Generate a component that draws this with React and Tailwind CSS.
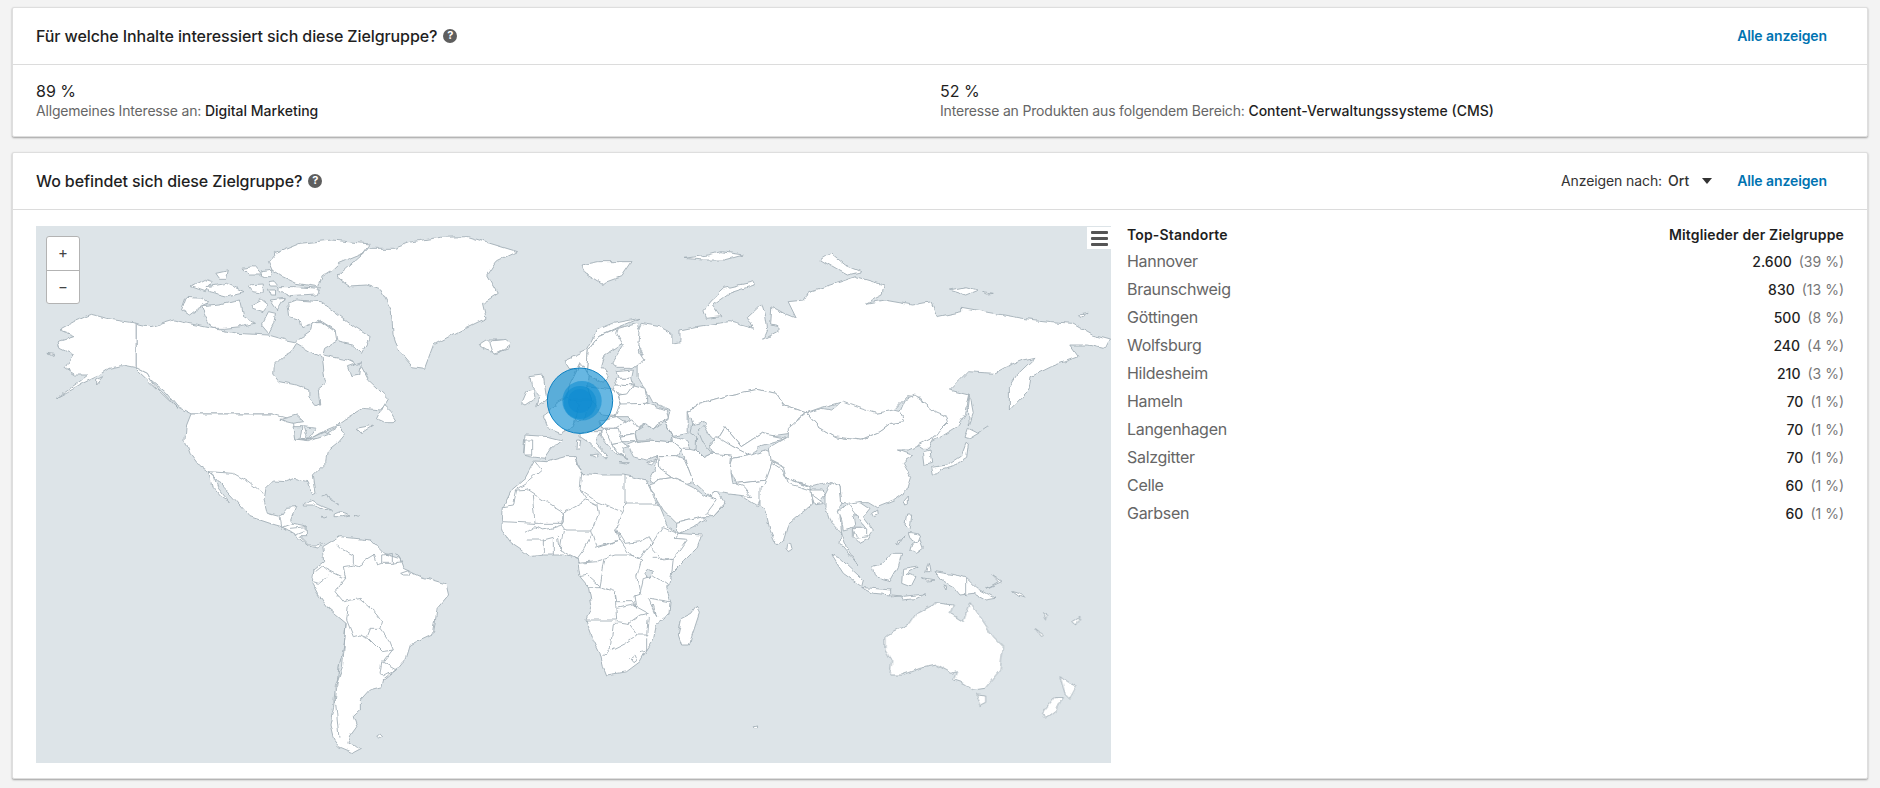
import React from "react";

const Z3 = [30, 220, 2.851, 3];
const Z4 = [480, 220, 2.45, 3];
const Z5 = [280, 480, 2.8, 3];
const Z6 = [800, 480, 3, 3];
const Z7 = [490, 300, 3, 3];
const Z8 = [760, 380, 3, 3];
const Z9 = [180, 420, 3, 3];
const Z10 = [500, 480, 3, 3];

const land = [
  [Z3, [
    "90,325 125,305 175,283 230,298 303,310 303,443 335,460 350,490 380,520 420,565 345,490 300,445 262,437 225,445 190,470 150,490 110,515 75,535 135,490 165,465 130,465 100,445 125,405 85,385 80,365 125,350 90,335",
    "303,310 345,320 372,312 410,300 450,310 520,325 590,340 680,345 730,360 755,365 780,350 800,335 805,305 830,305 870,335 880,360 840,385 835,405 905,420 945,440 965,480 1020,535 1000,570 950,565 910,590 870,620 825,640 790,662 755,660 750,620 720,600 690,582 460,582 420,560 385,515 345,480 335,460 303,443",
    "735,250 760,240 830,245 880,285 925,320 970,350 945,400 920,375 875,365 870,330 825,300 800,310 775,320 770,300 740,290",
    "490,260 540,255 580,245 600,240 610,290 640,310 600,320 555,325 520,325 500,290",
    "432,270 445,232 490,235 510,250 480,265 455,285",
    "630,255 660,238 680,255 665,275 635,265",
    "680,275 700,280 695,310 680,340 660,315",
    "685,240 725,235 705,270",
    "680,125 700,100 770,70 860,60 970,72 950,100 880,130 860,150 830,170 820,200 760,190 720,170 690,150",
    "710,200 760,200 825,205 815,225 740,230 710,215",
    "460,200 500,178 520,185 500,215",
    "505,200 560,190 610,215 560,228 510,215",
    "530,160 565,152 560,175 540,175",
    "605,145 640,140 660,165 625,165",
    "660,155 690,150 685,170 665,170",
    "620,195 665,192 665,220 635,215",
    "680,185 700,182 710,195 685,195",
    "680,210 700,210 700,225 685,225",
    "880,165 965,85 1040,85 1090,65 1170,52 1250,50 1305,68 1390,95 1330,125 1305,165 1335,220 1290,250 1300,295 1230,330 1150,375 1125,445 1090,440 1050,390 1035,340 1030,270 1000,210 960,195 910,198 880,175",
    "1285,370 1300,360 1345,360 1370,372 1365,385 1330,400 1300,390 1283,378",
    "990,598 1010,555 1030,575 1045,600 1035,605 1005,605",
    "930,625 980,615 945,640",
    "48,400 70,403 62,407",
    "190,480 210,470 190,495",
  ]],
  [Z9, [
    "33,-18 276,-18 340,0 345,60 385,65 440,40 475,18 495,40 470,70 445,90 440,125 400,165 408,220 398,225 385,185 345,175 320,185 280,183 258,205 252,240 262,280 300,290 320,262 348,260 332,300 340,310 378,318 380,350 360,350 385,375 410,375 430,370 415,385 385,378 345,345 305,320 270,310 210,290 180,255 130,200 100,165 85,155 60,140 30,100 15,60 18,20",
    "85,155 103,170 115,205 148,245 125,232 97,200",
    "370,250 395,243 430,260 455,270 430,268 400,255 370,255",
    "463,282 480,275 510,285 485,290 462,290",
    "424,289 440,291 432,294",
    "522,287 540,288 535,292",
  ]],
  [Z5, [
    "120,200 165,170 255,180 290,220 335,235 345,265 395,290 465,312 472,345 440,385 430,460 390,480 365,495 355,530 325,570 290,600 285,620 250,630 225,660 225,690 205,710 215,740 195,770 190,790 228,805 205,818 165,800 150,780 140,735 150,680 155,620 175,560 185,430 135,385 105,340 90,310 95,270 125,245",
    "268,772 280,762 287,770 275,777",
    "1325,740 1340,738 1340,746 1328,746",
  ]],
  [Z10, [
    "103,-57 140,-55 195,-70 225,-70 230,-40 245,-20 305,-15 370,-15 440,0 460,50 480,80 505,140 535,160 605,165 590,205 550,245 515,280 510,315 500,320 513,370 510,400 470,430 460,480 440,510 420,545 380,575 320,585 310,560 300,520 280,480 258,420 275,375 265,320 240,290 232,235 190,225 130,225 90,230 60,205 30,185 5,150 10,80 35,30 75,-5",
    "590,378 598,400 575,470 568,495 545,495 535,465 545,415 575,400",
    "392,535 405,525 412,540 402,548",
  ]],
  [Z4, [
    "395,310 440,320 470,340 470,370 490,365 490,330 530,320 610,305 670,325 655,290 690,250 700,290 705,330 695,358 730,335 730,320 712,315 715,260 745,280 775,295 755,245 795,240 805,215 860,195 920,170 990,195 985,225 945,250 990,240 1060,255 1105,245 1120,290 1180,275 1180,262 1260,280 1330,295 1400,305 1450,310 1500,345 1545,360 1525,385 1490,375 1445,375 1465,410 1400,440 1350,470 1345,510 1297,570 1297,500 1315,465 1360,412 1330,420 1290,440 1260,460 1195,455 1150,510 1200,525 1190,580 1170,620 1130,650 1085,680 1145,595 1100,570 1080,535 1045,530 1010,575 970,580 920,565 880,548 830,565 800,578 745,555 725,520 680,508 610,525 540,550 510,575 510,640 470,650 435,610 460,600 465,570 420,545 405,510 385,470 385,440 400,405 380,350",
    "250,135 290,125 370,125 345,170 300,190 260,160",
    "670,185 600,205 565,245 548,270 555,295 590,290 570,255 610,220 672,195",
    "500,115 560,105 590,95 645,105 600,120 550,120",
    "835,120 860,100 895,135 935,155 900,165 870,145",
    "1150,210 1190,200 1220,210 1190,225",
    "1230,215 1260,220 1240,222",
    "1465,285 1490,280 1470,292",
    "510,575 540,550 610,525 680,508 725,520 745,555 800,578 775,600 760,640 700,650 690,640 640,680 600,620 580,660 565,650 545,605 520,620",
    "580,660 600,620 640,680 690,640 750,655 680,680 665,710 620,680",
    "560,680 580,650 620,680 660,705 620,715 570,700",
    "620,715 665,705 700,690 735,710 710,745 705,780 630,790 610,750",
    "630,790 705,780 715,725 745,745 700,800 680,860 630,820",
  ]],
  [Z7, [
    "225,180 290,150 320,90 370,70 450,55 385,82 325,110 295,150 290,215 240,205",
    "295,150 325,110 385,85 400,130 345,165 335,200 355,225 340,250 295,225 290,212",
    "385,85 440,70 450,95 445,150 465,180 430,205 380,205 365,190 400,135 380,100",
    "378,215 430,210 425,235 385,235",
    "375,235 425,235 430,255 380,252",
    "378,252 430,255 410,285 370,280",
    "410,282 430,255 465,265 470,295 470,310 395,315 385,285",
    "290,260 370,270 385,290 395,315 385,350 335,345 305,300",
    "390,312 470,310 530,330 535,355 500,375 490,390 470,370 435,390 425,385 415,350 375,350",
    "240,250 290,255 305,300 280,360 240,365 235,300",
    "210,400 175,385 160,350 180,335 200,310 235,290 270,310 250,380 215,400",
    "230,290 240,250 270,190 295,225 290,260 305,300 240,300",
    "270,400 300,395 330,395 315,425 355,470 340,470 300,430 270,410",
    "105,405 175,410 215,420 185,445 165,475 120,470 100,465",
    "105,420 128,420 128,465 102,465",
    "120,230 160,225 170,300 140,320 150,290 125,260",
    "95,310 110,275 130,270 135,295 105,315",
    "330,395 345,380 360,400 370,440 395,470 410,475 385,465 365,450 330,405",
    "330,360 380,350 425,380 375,385 335,385",
    "375,385 425,355 445,385 435,400 385,410",
    "385,410 435,400 440,425 395,425",
    "365,430 395,425 415,440 395,445 410,475 385,460",
    "345,385 385,385 395,425 365,430",
    "415,435 440,425 480,420 550,425 575,445 560,470 505,470 470,480 430,470 420,450",
    "525,365 550,410 590,425 600,445 575,445 550,425 548,410",
    "575,445 600,445 620,450 640,472 665,460 725,465 720,515 725,545 760,560 785,590 700,580 680,575 660,590 610,545 585,480",
    "505,470 560,470 585,480 610,545 590,550 545,530 510,505",
    "500,480 505,470 510,505 545,530 510,535 490,550 478,540 495,510",
    "490,550 510,535 545,530 590,550 610,560 640,585 680,600 705,615 670,650 640,650 560,670 520,630 475,555",
    "660,590 680,575 705,610 670,650 650,640 680,600",
    "560,670 640,650 650,660 570,700 560,690",
    "390,488 415,488 410,492",
    "300,465 325,462 320,474",
    "260,420 272,420 268,450 258,450",
    "470,490 498,480 485,495",
    "0,130 10,122 50,118 65,130 40,150 10,160",
  ]],
  [Z8, [
    "420,95 435,60 465,48 495,70 525,95 560,110 565,125 540,150 525,170 490,190 445,210 415,210 455,225 430,250 452,290 440,330 400,360 350,380 325,365 300,365 275,375 245,370 240,320 215,305 160,320 80,295 70,260 30,240 25,205 85,170 85,145 108,125 140,100 175,140 225,170 300,180 360,155 395,130 432,125",
    "140,100 185,85 215,90 245,65 300,85 350,100 400,90 420,95 432,125 395,130 360,155 300,180 225,170 175,140",
    "475,195 525,170 505,205 490,205",
    "490,215 510,210 515,250 495,255",
    "515,262 560,255 605,225 618,190 625,195 620,235 580,260 540,270 530,285 520,285",
    "615,175 625,145 655,160 625,178",
    "630,45 640,100 628,135 625,85",
    "432,360 445,345 445,372 437,375",
    "335,400 350,390 352,405 340,410",
    "10,320 35,250 70,275 80,295 155,330 155,375 115,405 85,430 70,480 50,495 30,450 15,385 0,375 0,320",
    "150,330 190,330 195,345 175,370 155,370",
    "80,295 150,320 150,330 85,310",
    "152,340 190,370 160,375",
    "80,490 92,490 97,510 85,518 78,505",
    "195,345 215,305 240,320 245,370 235,395 250,400 240,410 245,460 210,425 195,380",
    "235,395 265,370 300,395 280,410 285,440 250,450 245,420",
    "262,370 300,365 330,385 310,410 340,450 320,480 300,490 280,470 280,445 320,445 285,400",
    "280,445 320,445 320,470 290,475",
    "245,460 260,505 295,555 265,520 240,490",
    "213,523 240,535 310,600 305,620 250,580",
    "305,622 392,630 392,645 340,640",
    "395,645 425,648 400,650",
    "425,650 495,642 470,655 430,660",
    "335,560 370,550 395,520 425,520 415,560 390,605 345,590",
    "428,565 475,558 440,580 465,590 450,620 425,610",
    "497,575 505,550 510,575",
    "484,593 525,600 500,603",
    "525,575 555,580 590,585 620,595 650,625 705,655 675,660 640,640 600,645 580,620 545,600",
    "695,585 725,605 680,625 715,605",
    "440,405 455,405 450,450 435,435",
    "455,490 480,480 490,505 470,520 450,510",
    "445,460 480,465 470,490 450,475",
    "410,495 435,465 420,490",
    "758,635 780,640 795,655 775,648",
    "550,615 560,620 558,630",
  ]],
  [Z6, [
    "255,475 280,455 330,430 350,400 400,375 405,368 460,375 450,400 490,425 510,365 540,410 580,470 610,500 600,570 555,625 520,630 490,610 460,600 470,575 455,580 410,555 360,565 305,585 270,585 275,545 255,510",
    "527,642 560,645 560,670 540,680",
    "780,590 800,605 830,618 810,655 795,640",
    "790,650 765,650 725,700 738,715 770,690",
    "705,448 728,465 722,470",
    "818,425 840,412 830,435",
    "728,400 740,405 735,418",
  ]],
];

const water = [
  [Z3, [
    "693,440 720,410 745,395 760,370 800,395 830,410 838,480 846,490 822,510 826,552 815,557 795,530 795,510 760,495 710,485 692,462",
    "905,440 945,425 940,465 915,470",
    "715,598 760,585 780,605 750,610 730,605",
    "750,620 775,620 770,660 755,660",
    "780,620 815,625 790,660 785,640",
    "790,660 840,635 860,640 820,655",
  ]],
  [Z7, [
    "605,375 640,365 650,372 625,395 640,430 665,460 640,472 618,450 620,410 600,395",
    "435,395 470,372 490,390 525,365 548,410 545,425 480,420 440,420",
  ]],
  [Z10, ["435,280 445,268 458,275 450,292 437,292"]],
];

const lines = [
  [Z9, [
    "85,155 160,160 205,185 250,220",
    "300,290 305,320", "340,310 300,325", "330,325 380,320", "345,345 370,335",
    "470,375 480,385 520,405 520,435 540,440 555,420 580,405 590,435 605,430 605,405 640,400",
    "605,430 640,430 640,400", "640,430 665,425 650,400",
    "400,460 425,440 465,460 497,475 490,440 520,435",
    "400,485 415,490 445,465",
    "497,475 465,515 490,545 540,535 580,570 605,605 600,625",
    "505,555 500,600 520,650",
    "560,650 570,625 600,625 630,665 640,690 605,695",
    "520,650 540,645 565,655 605,695",
    "662,460 685,452 690,465 670,465 662,460",
    "425,225 440,220 450,240 480,255",
  ]],
  [Z5, [
    "185,430 180,490 165,560 155,660 165,770",
    "285,545 325,570 290,590 280,580 285,545",
    "315,510 290,545",
  ]],
  [Z10, [
    "105,-55 125,-30 78,10 45,30",
    "10,80 40,75 50,30 80,28",
    "80,28 190,98",
    "97,45 105,130 8,125", "105,130 190,130 190,98", "190,98 185,135 155,145",
    "225,-70 235,-35 250,-15",
    "245,-20 240,30 260,60", "190,98 260,60 290,75",
    "375,-15 375,75", "375,72 475,72",
    "240,30 290,65 365,95 375,72",
    "290,65 295,100 275,150 195,150 185,135",
    "275,150 290,200 360,180 350,150 365,95",
    "190,150 180,210 232,235 250,210 275,165",
    "350,150 375,190 420,185 445,170 455,195 490,140",
    "490,140 535,160 525,175 560,178 520,235 490,240 450,195",
    "520,235 515,280", "455,235 515,235", "460,285 505,315",
    "285,205 360,180 390,225 345,225 315,235 290,240",
    "390,225 420,235 450,195",
    "315,235 300,320 345,335 350,365 400,365 410,385 405,345 420,340 410,290 425,240 390,225",
    "232,250 290,245", "240,290 260,285 300,320",
    "265,320 300,320", "345,335 350,420 260,420",
    "350,385 400,375 445,400 420,405 385,430 350,425",
    "420,340 430,295 460,285", "450,355 510,365", "445,355 470,410 460,375",
    "340,430 330,510 305,530", "350,430 340,430",
    "385,430 410,465 375,490 335,510",
    "445,410 440,465 410,465", "440,475 440,510 420,515",
    "75,160 105,140 125,150 155,145", "130,175 130,225", "160,175 160,225", "175,165 180,210",
    "80,180 130,180 160,172",
  ]],
  [Z8, ["617,593 617,648", "655,160 685,140"]],
];

function Shapes({ items, tag: Tag, className }) {
  return items.map(([[ox, oy, sx, sy], polys], i) => (
    <g key={i} transform={`translate(${ox} ${oy}) scale(${1 / sx} ${1 / sy})`}>
      {polys.map((p, j) => (
        <Tag key={j} points={p} className={className} vectorEffect="non-scaling-stroke" />
      ))}
    </g>
  ));
}

function WorldMap() {
  return (
    <svg viewBox="36 226 1075 537" className="block w-full h-full">
      <defs>
        <filter id="coast" x="36" y="226" width="1075" height="537" filterUnits="userSpaceOnUse">
          <feTurbulence type="fractalNoise" baseFrequency="0.11" numOctaves="2" seed="4" result="n" />
          <feDisplacementMap in="SourceGraphic" in2="n" scale="5" xChannelSelector="R" yChannelSelector="G" />
          <feGaussianBlur stdDeviation="0.25" />
        </filter>
      </defs>
      <g filter="url(#coast)">
        <Shapes items={land} tag="polygon" className="fill-white stroke-[#a3afb7] stroke-[0.9] [stroke-linejoin:round]" />
        <Shapes items={water} tag="polygon" className="fill-[#dde4e8] stroke-[#a3afb7] stroke-[0.9] [stroke-linejoin:round]" />
        <Shapes items={lines} tag="polyline" className="fill-none stroke-[#a3afb7] stroke-[0.9] [stroke-linejoin:round]" />
      </g>
      <circle cx="580" cy="400.7" r="32.7" fill="#0a8ad0" fillOpacity="0.62" stroke="#0a7fc0" strokeWidth="1" />
      <circle cx="582" cy="400.7" r="19.7" fill="#0a8ad0" fillOpacity="0.55" />
      <circle cx="580" cy="402.5" r="16.5" fill="#0a8ad0" fillOpacity="0.55" />
      <circle cx="580" cy="401" r="12" fill="#0a8ad0" fillOpacity="0.45" />
    </svg>
  );
}

function Help() {
  return (
    <span className="inline-flex items-center justify-center w-[14px] h-[14px] rounded-full bg-[#5e5e5e] text-white text-[11px] leading-none font-bold ml-[6px]">?</span>
  );
}

function Link() {
  return <a className="text-[14px] font-semibold text-[#0073b1] ml-[25px] tracking-[-0.1px]">Alle anzeigen</a>;
}

const rows = [
  ["Hannover", "2.600", "39"],
  ["Braunschweig", "830", "13"],
  ["Göttingen", "500", "8"],
  ["Wolfsburg", "240", "4"],
  ["Hildesheim", "210", "3"],
  ["Hameln", "70", "1"],
  ["Langenhagen", "70", "1"],
  ["Salzgitter", "70", "1"],
  ["Celle", "60", "1"],
  ["Garbsen", "60", "1"],
];

function Card({ title, right, children }) {
  return (
    <section className="bg-white border border-[#dedede] rounded-[2px] shadow-[0_1px_2px_rgba(0,0,0,0.35)]">
      <header className="h-[57px] flex items-center justify-between pl-[23px] pr-[40px] border-b border-[#dcdcdc] pb-[1px]">
        <h2 className="flex items-center text-[16px] font-medium text-[#1f1f1f] tracking-[-0.1px]">{title}<Help /></h2>
        <div className="flex items-center">{right}</div>
      </header>
      {children}
    </section>
  );
}

export default function App() {
  return (
    <div className="h-[788px] overflow-hidden bg-[#f3f3f3] pt-[7px] px-[12px] flex flex-col gap-[15px] font-['Inter','Liberation_Sans',sans-serif]">
      <Card title="Für welche Inhalte interessiert sich diese Zielgruppe?" right={<Link />}>
        <div className="h-[71px] pl-[23px] pt-[16px] grid grid-cols-[904px_1fr]">
          <div>
            <div className="text-[16px] leading-[20px] text-[#1f1f1f]">89 %</div>
            <div className="text-[14px] leading-[20px] text-[#666] tracking-[-0.18px]">Allgemeines Interesse an: <span className="font-medium text-[#1f1f1f] tracking-normal">Digital Marketing</span></div>
          </div>
          <div>
            <div className="text-[16px] leading-[20px] text-[#1f1f1f]">52 %</div>
            <div className="text-[14px] leading-[20px] text-[#666] tracking-[-0.18px]">Interesse an Produkten aus folgendem Bereich: <span className="font-medium text-[#1f1f1f] tracking-normal">Content-Verwaltungssysteme (CMS)</span></div>
          </div>
        </div>
      </Card>
      <Card
        title="Wo befindet sich diese Zielgruppe?"
        right={
          <>
            <span className="text-[14px] text-[#333] tracking-[-0.1px]">Anzeigen nach:</span>
            <span className="text-[14px] font-medium text-[#333] ml-[6px]">Ort</span>
            <span className="ml-[13px] w-0 h-0 border-x-[5px] border-x-transparent border-t-[6px] border-t-[#333]" />
            <Link />
          </>
        }
      >
        <div className="flex pl-[23px] pr-[23px] pt-[16px] pb-[15px]">
          <div className="relative w-[1075px] h-[537px] bg-[#dde4e8] shrink-0">
            <WorldMap />
            <div className="absolute left-[10px] top-[10px] w-[34px] h-[68px] bg-white border border-[#b3b3b3] rounded-[3px] flex flex-col text-[#444]">
              <div className="flex-1 flex items-center justify-center border-b border-[#b3b3b3] text-[15px]">+</div>
              <div className="flex-1 flex items-center justify-center text-[15px]">−</div>
            </div>
            <div className="absolute right-0 top-[1px] w-[24px] h-[22px] bg-white flex flex-col items-center justify-center gap-[3px]">
              <span className="block w-[17px] h-[3px] rounded-[1px] bg-[#555]" />
              <span className="block w-[17px] h-[3px] rounded-[1px] bg-[#555]" />
              <span className="block w-[17px] h-[3px] rounded-[1px] bg-[#555]" />
            </div>
          </div>
          <div className="flex-1 ml-[16px]">
            <div className="flex justify-between text-[14px] font-semibold text-[#1f1f1f] leading-[18px] tracking-[0.15px]">
              <span>Top-Standorte</span>
              <span>Mitglieder der Zielgruppe</span>
            </div>
            <div className="mt-[3px]">
              {rows.map(([name, val, pct]) => (
                <div key={name} className="h-[28px] flex items-center justify-between">
                  <span className="text-[16px] text-[#666] tracking-[-0.3px]">{name}</span>
                  <span className="text-[14px]">
                    <span className="font-medium text-[#1f1f1f]">{val}</span>
                    <span className="text-[#777] ml-[7px]">({pct} %)</span>
                  </span>
                </div>
              ))}
            </div>
          </div>
        </div>
      </Card>
    </div>
  );
}
